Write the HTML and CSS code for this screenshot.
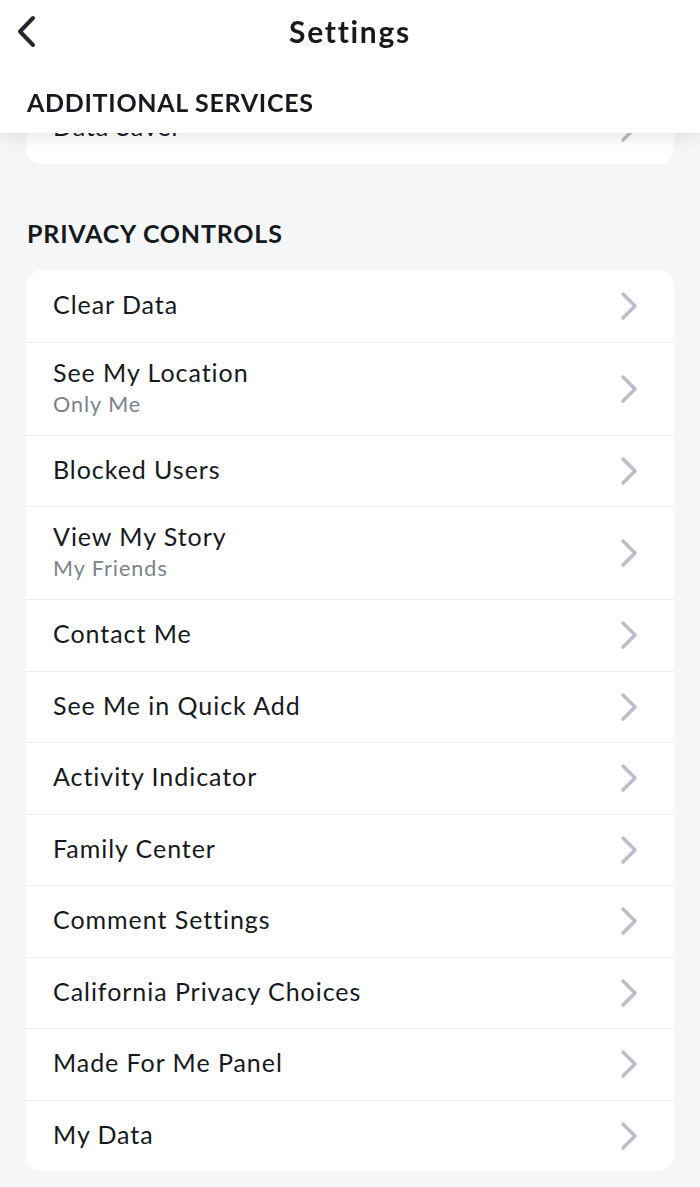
FILE: index.html
```html
<!DOCTYPE html>
<html lang="en">
<head>
<meta charset="utf-8">
<title>Settings</title>
<link rel="stylesheet" href="styles.css">
</head>
<body>
<header class="header">
  <div class="topbar">
    <button class="back" aria-label="Back">
      <svg width="24" height="36" viewBox="0 0 24 36"><polyline points="18,4 5,17.5 18,31" fill="none" stroke="#24272b" stroke-width="4" stroke-linecap="round" stroke-linejoin="round"/></svg>
    </button>
    <h1 class="title">Settings</h1>
    <span></span>
  </div>
  <div class="header-label">ADDITIONAL SERVICES</div>
</header>

<main class="content">
  <div class="card">
    <div class="row">
      <div class="row-text"><span class="row-title">Data Saver</span></div>
      <svg class="chev" width="20" height="30" viewBox="0 0 20 30"><polyline points="4,3 16,15 4,27" fill="none" stroke="#b9bfc6" stroke-width="3.5" stroke-linecap="round" stroke-linejoin="round"/></svg>
    </div>
  </div>

  <h2 class="section-title">PRIVACY CONTROLS</h2>

  <div class="card">
    <div class="row">
      <div class="row-text"><span class="row-title">Clear Data</span></div>
      <svg class="chev" width="20" height="30" viewBox="0 0 20 30"><polyline points="4,3 16,15 4,27" fill="none" stroke="#b9bfc6" stroke-width="3.5" stroke-linecap="round" stroke-linejoin="round"/></svg>
    </div>
    <div class="row row-double">
      <div class="row-text"><span class="row-title">See My Location</span><span class="row-sub">Only Me</span></div>
      <svg class="chev" width="20" height="30" viewBox="0 0 20 30"><polyline points="4,3 16,15 4,27" fill="none" stroke="#b9bfc6" stroke-width="3.5" stroke-linecap="round" stroke-linejoin="round"/></svg>
    </div>
    <div class="row">
      <div class="row-text"><span class="row-title">Blocked Users</span></div>
      <svg class="chev" width="20" height="30" viewBox="0 0 20 30"><polyline points="4,3 16,15 4,27" fill="none" stroke="#b9bfc6" stroke-width="3.5" stroke-linecap="round" stroke-linejoin="round"/></svg>
    </div>
    <div class="row row-double">
      <div class="row-text"><span class="row-title">View My Story</span><span class="row-sub">My Friends</span></div>
      <svg class="chev" width="20" height="30" viewBox="0 0 20 30"><polyline points="4,3 16,15 4,27" fill="none" stroke="#b9bfc6" stroke-width="3.5" stroke-linecap="round" stroke-linejoin="round"/></svg>
    </div>
    <div class="row">
      <div class="row-text"><span class="row-title">Contact Me</span></div>
      <svg class="chev" width="20" height="30" viewBox="0 0 20 30"><polyline points="4,3 16,15 4,27" fill="none" stroke="#b9bfc6" stroke-width="3.5" stroke-linecap="round" stroke-linejoin="round"/></svg>
    </div>
    <div class="row">
      <div class="row-text"><span class="row-title">See Me in Quick Add</span></div>
      <svg class="chev" width="20" height="30" viewBox="0 0 20 30"><polyline points="4,3 16,15 4,27" fill="none" stroke="#b9bfc6" stroke-width="3.5" stroke-linecap="round" stroke-linejoin="round"/></svg>
    </div>
    <div class="row">
      <div class="row-text"><span class="row-title">Activity Indicator</span></div>
      <svg class="chev" width="20" height="30" viewBox="0 0 20 30"><polyline points="4,3 16,15 4,27" fill="none" stroke="#b9bfc6" stroke-width="3.5" stroke-linecap="round" stroke-linejoin="round"/></svg>
    </div>
    <div class="row">
      <div class="row-text"><span class="row-title">Family Center</span></div>
      <svg class="chev" width="20" height="30" viewBox="0 0 20 30"><polyline points="4,3 16,15 4,27" fill="none" stroke="#b9bfc6" stroke-width="3.5" stroke-linecap="round" stroke-linejoin="round"/></svg>
    </div>
    <div class="row">
      <div class="row-text"><span class="row-title">Comment Settings</span></div>
      <svg class="chev" width="20" height="30" viewBox="0 0 20 30"><polyline points="4,3 16,15 4,27" fill="none" stroke="#b9bfc6" stroke-width="3.5" stroke-linecap="round" stroke-linejoin="round"/></svg>
    </div>
    <div class="row">
      <div class="row-text"><span class="row-title">California Privacy Choices</span></div>
      <svg class="chev" width="20" height="30" viewBox="0 0 20 30"><polyline points="4,3 16,15 4,27" fill="none" stroke="#b9bfc6" stroke-width="3.5" stroke-linecap="round" stroke-linejoin="round"/></svg>
    </div>
    <div class="row">
      <div class="row-text"><span class="row-title">Made For Me Panel</span></div>
      <svg class="chev" width="20" height="30" viewBox="0 0 20 30"><polyline points="4,3 16,15 4,27" fill="none" stroke="#b9bfc6" stroke-width="3.5" stroke-linecap="round" stroke-linejoin="round"/></svg>
    </div>
    <div class="row">
      <div class="row-text"><span class="row-title">My Data</span></div>
      <svg class="chev" width="20" height="30" viewBox="0 0 20 30"><polyline points="4,3 16,15 4,27" fill="none" stroke="#b9bfc6" stroke-width="3.5" stroke-linecap="round" stroke-linejoin="round"/></svg>
    </div>
  </div>
</main>
</body>
</html>
```

FILE: styles.css
```css
* { box-sizing: border-box; }

html, body {
  margin: 0;
  padding: 0;
}

body {
  background: #f5f6f8;
  font-family: "Lato", "Open Sans", "Liberation Sans", sans-serif;
  color: #16191d;
  overflow: hidden;
}

.header {
  position: fixed;
  top: 0;
  left: 0;
  right: 0;
  height: 133px;
  background: #ffffff;
  box-shadow: 0 3px 18px rgba(0, 0, 0, 0.11);
  z-index: 5;
}

.topbar {
  height: 64px;
  display: grid;
  grid-template-columns: 1fr auto 1fr;
  align-items: center;
}

.back {
  justify-self: start;
  margin-left: 15px;
  padding: 0;
  border: 0;
  background: none;
  display: flex;
  align-items: center;
}

.title {
  margin: 0 0 2px;
  font-size: 30px;
  font-weight: 700;
  letter-spacing: 1.7px;
  line-height: 36px;
  color: #16191d;
}

.header-label {
  margin: 23px 0 0 27px;
  font-size: 25px;
  font-weight: 700;
  line-height: 30px;
  letter-spacing: 0.7px;
  color: #16191d;
}

.content {
  padding: 92px 26px 0;
}

.card {
  background: #ffffff;
  border-radius: 16px;
  overflow: hidden;
}

.row {
  height: 71.5px;
  display: flex;
  align-items: center;
  justify-content: space-between;
  padding: 0 35px 0 27px;
  border-top: 1.5px solid #eceef0;
}

.row:first-child {
  border-top: 0;
}

.row-double {
  height: 93px;
}

.row-text {
  display: flex;
  flex-direction: column;
  padding-bottom: 4px;
}

.row-double .row-text {
  padding-bottom: 2px;
}

.row-title {
  font-size: 25px;
  line-height: 32px;
  letter-spacing: 0.95px;
  color: #16191d;
}

.row-sub {
  font-size: 21.5px;
  line-height: 32px;
  letter-spacing: 1px;
  color: #7b828b;
}

.chev {
  display: block;
  flex: none;
}

.section-title {
  margin: 54.5px 0 22px 1px;
  font-size: 25px;
  font-weight: 700;
  line-height: 30px;
  letter-spacing: 0.8px;
  color: #16191d;
}
```
